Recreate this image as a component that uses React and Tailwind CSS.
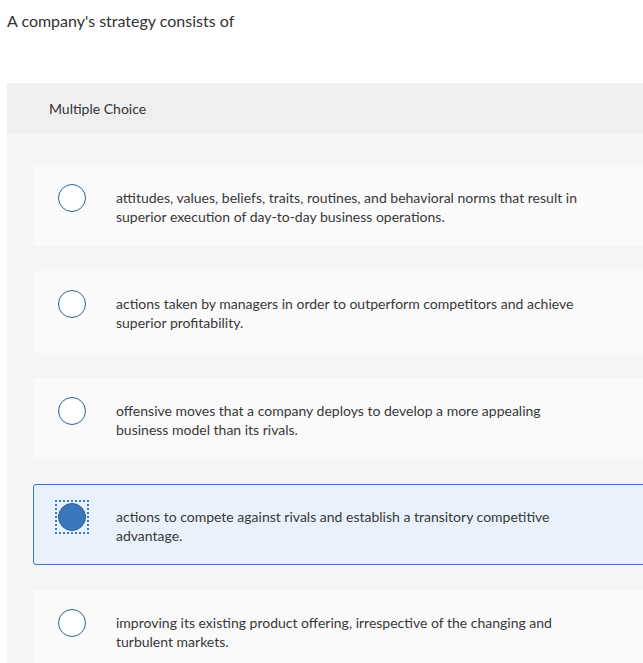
import React from "react";

const breaks = [
  ["attitudes, values, beliefs, traits, routines, and behavioral norms that result in", "superior execution of day-to-day business operations."],
  ["actions taken by managers in order to outperform competitors and achieve", "superior profitability."],
  ["offensive moves that a company deploys to develop a more appealing", "business model than its rivals."],
  ["actions to compete against rivals and establish a transitory competitive", "advantage."],
  ["improving its existing product offering, irrespective of the changing and", "turbulent markets."],
];

export default function App() {
  return (
    <div className="w-[643px] h-[663px] overflow-hidden bg-white" style={{ fontFamily: "Lato, 'Liberation Sans', sans-serif" }}>
      <div className="pl-[7px] pt-[10px] h-[83px] text-[16px] leading-[21px] text-[#333]">
        A company's strategy consists of
      </div>
      <div className="ml-[7px] w-[720px] rounded-tl-[3px] overflow-hidden">
        <div className="h-[50px] bg-[#efefef] pl-[42px] pt-[1px] flex items-center text-[14px] text-[#333]">
          Multiple Choice
        </div>
        <div className="bg-[#f5f5f5] pt-[32px] pl-[26px] flex flex-col gap-[25px] pb-10">
          {breaks.map((lines, i) => {
            const selected = i === 3;
            return (
              <div
                key={i}
                className={
                  "h-[81.25px] rounded-[3px] flex items-start " +
                  (selected
                    ? "bg-[#e9f2fc] border border-[#3a78c2] pt-[18px] pl-[21px]"
                    : "bg-[#fafafa] pt-[19px] pl-[22px]")
                }
              >
                <div className="w-[34px] h-[34px] -mt-[3px] flex items-center justify-center shrink-0">
                  {selected ? (
                    <div className="w-[34px] h-[34px] border-2 border-dotted border-[#3a78c2] flex items-center justify-center">
                      <div className="w-[28px] h-[28px] rounded-full bg-[#3b77bb] border border-[#2d6099]" />
                    </div>
                  ) : (
                    <div className="w-[28px] h-[28px] rounded-full bg-white border-[1.5px] border-[#2f5f92]" />
                  )}
                </div>
                <div className="ml-[27px] mt-[4px] text-[14px] leading-[19px] text-[#383838]">
                  {lines.map((l, j) => (
                    <div key={j}>{l}</div>
                  ))}
                </div>
              </div>
            );
          })}
        </div>
      </div>
    </div>
  );
}
